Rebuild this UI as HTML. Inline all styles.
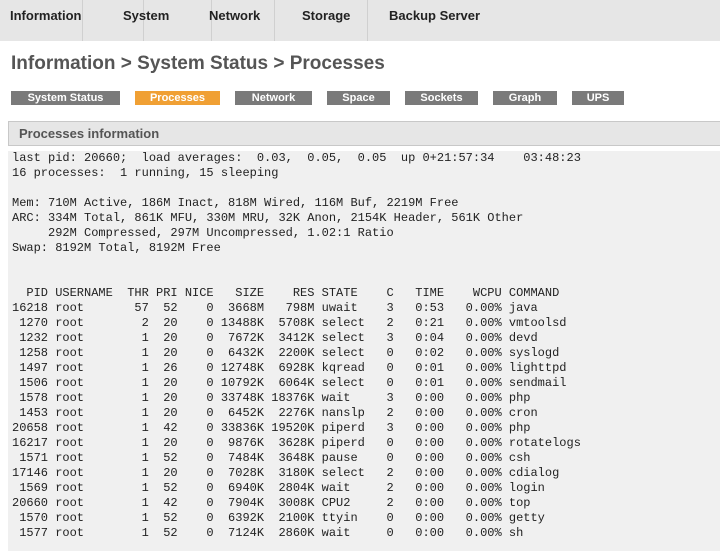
<!DOCTYPE html>
<html><head><meta charset="utf-8"><style>
body{margin:0;width:720px;height:555px;overflow:hidden;background:#fff;font-family:"Liberation Sans",sans-serif;}
.nav{position:absolute;left:0;top:0;width:720px;height:41px;background:#e6e6e6;}
.sep{position:absolute;top:0;width:1px;height:41px;background:#d0d0d0;}
.nt{position:absolute;top:0;font-weight:bold;font-size:13px;color:#222;line-height:31px;white-space:nowrap;}
h1{position:absolute;left:11px;top:53px;margin:0;font-size:19px;color:#555;font-weight:bold;white-space:nowrap;}
.tab{position:absolute;top:91px;height:14px;background:#7a7a7a;color:#fff;font-size:11px;font-weight:bold;text-align:center;line-height:14px;}
.hdr{position:absolute;left:8px;top:121px;width:712px;height:25px;background:#e6e6e6;border:1px solid #c8c8c8;border-right:none;box-sizing:border-box;font-size:13px;font-weight:bold;color:#555;line-height:24px;padding-left:10px;}
pre{position:absolute;left:8px;top:151px;width:712px;height:400px;margin:0;background:#f0f0f0;padding:0 0 0 4px;box-sizing:border-box;font-family:"Liberation Mono",monospace;font-size:12px;line-height:15px;color:#222;}
</style></head><body>
<div class="nav">
<div class="sep" style="left:82px"></div>
<div class="sep" style="left:143px"></div>
<div class="sep" style="left:211px"></div>
<div class="sep" style="left:274px"></div>
<div class="sep" style="left:367px"></div>
<span class="nt" style="left:10px">Information</span>
<span class="nt" style="left:123px">System</span>
<span class="nt" style="left:209px">Network</span>
<span class="nt" style="left:302px">Storage</span>
<span class="nt" style="left:389px">Backup Server</span>
</div>
<h1>Information &gt; System Status &gt; Processes</h1>
<div class="tab" style="left:11px;width:109px">System Status</div>
<div class="tab" style="left:135px;width:85px;background:#f0a034">Processes</div>
<div class="tab" style="left:235px;width:77px">Network</div>
<div class="tab" style="left:327px;width:63px">Space</div>
<div class="tab" style="left:405px;width:73px">Sockets</div>
<div class="tab" style="left:493px;width:64px">Graph</div>
<div class="tab" style="left:572px;width:52px">UPS</div>
<div class="hdr">Processes information</div>
<pre>last pid: 20660;  load averages:  0.03,  0.05,  0.05  up 0+21:57:34    03:48:23
16 processes:  1 running, 15 sleeping

Mem: 710M Active, 186M Inact, 818M Wired, 116M Buf, 2219M Free
ARC: 334M Total, 861K MFU, 330M MRU, 32K Anon, 2154K Header, 561K Other
     292M Compressed, 297M Uncompressed, 1.02:1 Ratio
Swap: 8192M Total, 8192M Free


  PID USERNAME  THR PRI NICE   SIZE    RES STATE    C   TIME    WCPU COMMAND
16218 root       57  52    0  3668M   798M uwait    3   0:53   0.00% java
 1270 root        2  20    0 13488K  5708K select   2   0:21   0.00% vmtoolsd
 1232 root        1  20    0  7672K  3412K select   3   0:04   0.00% devd
 1258 root        1  20    0  6432K  2200K select   0   0:02   0.00% syslogd
 1497 root        1  26    0 12748K  6928K kqread   0   0:01   0.00% lighttpd
 1506 root        1  20    0 10792K  6064K select   0   0:01   0.00% sendmail
 1578 root        1  20    0 33748K 18376K wait     3   0:00   0.00% php
 1453 root        1  20    0  6452K  2276K nanslp   2   0:00   0.00% cron
20658 root        1  42    0 33836K 19520K piperd   3   0:00   0.00% php
16217 root        1  20    0  9876K  3628K piperd   0   0:00   0.00% rotatelogs
 1571 root        1  52    0  7484K  3648K pause    0   0:00   0.00% csh
17146 root        1  20    0  7028K  3180K select   2   0:00   0.00% cdialog
 1569 root        1  52    0  6940K  2804K wait     2   0:00   0.00% login
20660 root        1  42    0  7904K  3008K CPU2     2   0:00   0.00% top
 1570 root        1  52    0  6392K  2100K ttyin    0   0:00   0.00% getty
 1577 root        1  52    0  7124K  2860K wait     0   0:00   0.00% sh</pre>
</body></html>
